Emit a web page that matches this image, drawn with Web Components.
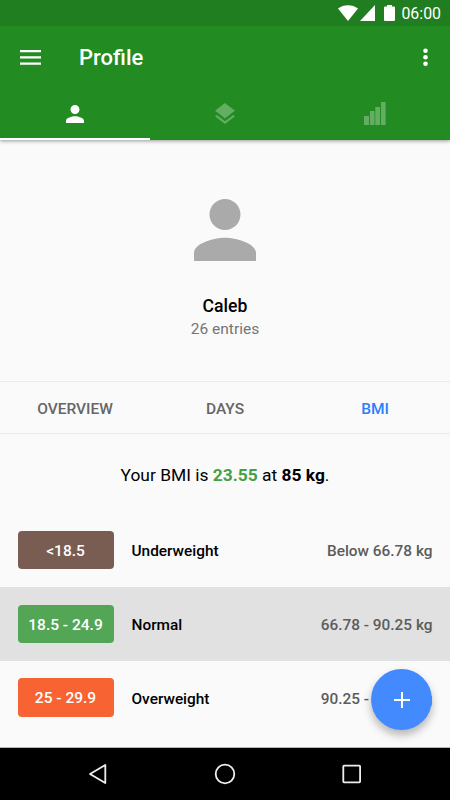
<!DOCTYPE html>
<html lang="en">
<head>
<meta charset="utf-8">
<title>Profile</title>
<style>
	html, body {
		margin: 0;
		height: 100%;
		overflow: hidden;
	}
	body {
		font-family: Roboto, "Noto Sans", sans-serif;
		color: #000;
		background: #fafafa;
	}
</style>
</head>
<body>
<profile-app></profile-app>

<script>
// base class: puts the styles and the markup in an open shadow root
class BaseElement extends HTMLElement {
	constructor() {
		super();
		this.attachShadow({ mode: 'open' });
	}

	connectedCallback() {
		this.shadowRoot.innerHTML = `<style>${this.styles()}</style>${this.render()}`;
	}
}

const icons = {
	wifi: ['0 0 20 16', '<path d="M0 3.6C2.7 1.400 6.100.2 10 .2s7.300 1.200 10 3.400L10 16z"/>'],
	cell: ['0 0 16 16', '<path d="M0 16 16 0v16z"/>'],
	battery: ['0 0 11 16', '<path d="M3 0h5v1.500h2a1 1 0 0 1 1 1V15a1 1 0 0 1-1 1H1a1 1 0 0 1-1-1V2.500a1 1 0 0 1 1-1h2z"/>'],
	menu: ['0 0 21 15', '<path d="M0 0h21v2.300H0zM0 6.300h21v2.300H0zM0 12.500h21v2.300H0z"/>'],
	more: ['0 0 5 19', '<circle cx="2.500" cy="2.700" r="2.300"/><circle cx="2.500" cy="9.300" r="2.300"/><circle cx="2.500" cy="15.800" r="2.300"/>'],
	person: ['4 4 16 16', '<path d="M12 12c2.210 0 4-1.790 4-4s-1.790-4-4-4-4 1.790-4 4 1.790 4 4 4zm0 2c-2.670 0-8 1.340-8 4v2h16v-2c0-2.660-5.330-4-8-4z"/>'],
	layers: ['3 2 18 19.070', '<path d="M11.990 18.540l-7.370-5.730L3 14.070l9 7 9-7-1.630-1.270-7.380 5.740zM12 16l7.360-5.730L21 9l-9-7-9 7 1.630 1.270L12 16z"/>'],
	chart: ['0 0 22 23', '<path d="M0 14h5v9H0zM6 9h4.500v14H6zM11.300 5H16v18h-4.700zM17 0h4.600v23H17z"/>'],
	plus: ['0 0 16 16', '<path d="M7 0h2v7h7v2H9v7H7V9H0V7h7z"/>'],
	back: ['0 0 20 22', '<path d="M17.300 2v18L2 11z" fill="none" stroke="currentColor" stroke-width="1.800" stroke-linejoin="round"/>'],
	home: ['0 0 22 22', '<circle cx="11" cy="11" r="9.300" fill="none" stroke="currentColor" stroke-width="1.800"/>'],
	recent: ['0 0 20 20', '<rect x="1.300" y="1.600" width="16.800" height="16.800" rx=".8" fill="none" stroke="currentColor" stroke-width="1.800"/>'],
};

class AppIcon extends BaseElement {
	styles() {
		return `
			:host { display: inline-flex; flex: none; }
			svg { display: block; fill: currentColor; }
		`;
	}

	render() {
		const [box, shape] = icons[this.getAttribute('name')];
		const w = this.getAttribute('w');
		const h = this.getAttribute('h');
		return `<svg width="${w}" height="${h}" viewBox="${box}" preserveAspectRatio="none">${shape}</svg>`;
	}
}
customElements.define('app-icon', AppIcon);

class StatusBar extends BaseElement {
	styles() {
		return `
			:host {
				display: flex;
				justify-content: flex-end;
				align-items: center;
				box-sizing: border-box;
				height: 26px;
				padding-right: 9px;
				background: #207d20;
				color: #fff;
				font-size: 16px;
				line-height: 26px;
			}
			.cell { margin-left: 2px; }
			.battery { margin: 0 6.500px 0 9px; }
			time { padding-top: 2px; font-size: 15.9px; }
		`;
	}

	render() {
		return `
			<app-icon name="wifi" w="20" h="16"></app-icon>
			<app-icon class="cell" name="cell" w="15" h="16"></app-icon>
			<app-icon class="battery" name="battery" w="11" h="16"></app-icon>
			<time>06:00</time>
		`;
	}
}
customElements.define('status-bar', StatusBar);

class ToolBar extends BaseElement {
	styles() {
		return `
			:host {
				display: flex;
				align-items: center;
				box-sizing: border-box;
				height: 62px;
				padding: 0 22px 0 20px;
			}
			h1 {
				flex: 1;
				margin: 1px 0 0 38px;
				font-size: 22px;
				font-weight: 500;
				line-height: 26px;
			}
		`;
	}

	render() {
		return `
			<app-icon name="menu" w="21" h="15"></app-icon>
			<h1><slot></slot></h1>
			<app-icon name="more" w="5" h="19"></app-icon>
		`;
	}
}
customElements.define('tool-bar', ToolBar);

class IconTab extends BaseElement {
	styles() {
		return `
			:host {
				display: flex;
				flex: 1;
				justify-content: center;
				align-items: center;
				box-sizing: border-box;
				height: 52px;
				padding-top: 1px;
				border-bottom: 2px solid transparent;
				color: rgba(255, 255, 255, .3);
			}
			:host([active]) {
				color: #fff;
				border-bottom-color: #fff;
			}
		`;
	}

	render() {
		return '<slot></slot>';
	}
}
customElements.define('icon-tab', IconTab);

class ProfileHeader extends BaseElement {
	styles() {
		return `
			:host {
				display: flex;
				flex-direction: column;
				align-items: center;
				box-sizing: border-box;
				height: 242px;
				padding-top: 59px;
				border-bottom: 1px solid #ebebeb;
			}
			app-icon { color: #aaa; }
			.name {
				margin-top: 34px;
				font-size: 17.6px;
				font-weight: 500;
				line-height: 22px;
			}
			.count {
				margin-top: 2px;
				color: #757575;
				font-size: 15.5px;
				line-height: 20px;
			}
		`;
	}

	render() {
		return `
			<app-icon name="person" w="62" h="62"></app-icon>
			<div class="name"><slot name="name"></slot></div>
			<div class="count"><slot name="count"></slot></div>
		`;
	}
}
customElements.define('profile-header', ProfileHeader);

class TextTab extends BaseElement {
	styles() {
		return `
			:host {
				flex: 1;
				color: #666;
				font-size: 15.5px;
				font-weight: 500;
				line-height: 54px;
				text-align: center;
			}
			:host([active]) { color: #2a7fff; }
		`;
	}

	render() {
		return '<slot></slot>';
	}
}
customElements.define('text-tab', TextTab);

class BmiRow extends BaseElement {
	styles() {
		return `
			:host {
				display: flex;
				align-items: center;
				box-sizing: border-box;
				height: 73.7px;
				padding: 0 17.5px;
				font-size: 15.4px;
				font-weight: 500;
			}
			:host([current]) { background: #e1e1e1; }
			.range {
				box-sizing: border-box;
				width: 96px;
				height: 38.5px;
				padding-top: 1px;
				border-radius: 4px;
				background: var(--range-color);
				color: #fff;
				font-size: 15.5px;
				line-height: 38.5px;
				text-align: center;
			}
			.label { flex: 1; margin-left: 18px; }
			.label, .weight { padding-top: 2px; }
			.weight { color: #5c5c5c; }
		`;
	}

	render() {
		return `
			<div class="range">${this.getAttribute('range').replace('<', '&lt;')}</div>
			<div class="label"><slot></slot></div>
			<div class="weight">${this.getAttribute('weight')}</div>
		`;
	}
}
customElements.define('bmi-row', BmiRow);

class FabButton extends BaseElement {
	styles() {
		return `
			:host {
				display: flex;
				justify-content: center;
				align-items: center;
				width: 61px;
				height: 61px;
				border-radius: 50%;
				background: #448aff;
				color: #fff;
				box-shadow: 0 5px 9px rgba(0, 0, 0, .28);
			}
		`;
	}

	render() {
		return '<app-icon name="plus" w="16" h="16"></app-icon>';
	}
}
customElements.define('fab-button', FabButton);

class NavBar extends BaseElement {
	styles() {
		return `
			:host {
				display: flex;
				justify-content: center;
				align-items: center;
				gap: 106px;
				height: 52px;
				background: #000;
				color: #eee;
			}
		`;
	}

	render() {
		return `
			<app-icon name="back" w="20" h="22"></app-icon>
			<app-icon name="home" w="22" h="22"></app-icon>
			<app-icon name="recent" w="20" h="20"></app-icon>
		`;
	}
}
customElements.define('nav-bar', NavBar);

class ProfileApp extends BaseElement {
	styles() {
		return `
			:host {
				display: flex;
				flex-direction: column;
				width: 450px;
				height: 800px;
				overflow: hidden;
			}
			header {
				background: #228b22;
				color: #fff;
				box-shadow: 0 1px 4px rgba(0, 0, 0, .4);
				z-index: 1;
			}
			.tabs { display: flex; }
			main {
				position: relative;
				flex: 1;
				box-sizing: border-box;
				border-bottom: 1px solid #b5b5b5;
			}
			.sections {
				display: flex;
				height: 51px;
				border-bottom: 1px solid #ebebeb;
			}
			.summary {
				margin: 0;
				height: 79.3px;
				font-size: 17.4px;
				line-height: 82px;
				text-align: center;
			}
			.summary b { font-weight: 700; }
			.summary .value { color: #43a047; }
			fab-button {
				position: absolute;
				right: 18px;
				bottom: 17px;
			}
		`;
	}

	render() {
		return `
			<header>
				<status-bar></status-bar>
				<tool-bar>Profile</tool-bar>
				<div class="tabs">
					<icon-tab active><app-icon name="person" w="18" h="18"></app-icon></icon-tab>
					<icon-tab><app-icon name="layers" w="20" h="21"></app-icon></icon-tab>
					<icon-tab><app-icon name="chart" w="22" h="23"></app-icon></icon-tab>
				</div>
			</header>
			<main>
				<profile-header>
					<span slot="name">Caleb</span>
					<span slot="count">26 entries</span>
				</profile-header>
				<div class="sections">
					<text-tab>OVERVIEW</text-tab>
					<text-tab>DAYS</text-tab>
					<text-tab active>BMI</text-tab>
				</div>
				<p class="summary">Your BMI is <b class="value">23.55</b> at <b>85 kg</b>.</p>
				<bmi-row range="<18.5" weight="Below 66.78 kg" style="--range-color: #795c52">Underweight</bmi-row>
				<bmi-row current range="18.5 - 24.9" weight="66.78 - 90.25 kg" style="--range-color: #53a656">Normal</bmi-row>
				<bmi-row range="25 - 29.9" weight="90.25 - 108.3 kg" style="--range-color: #f76333">Overweight</bmi-row>
				<fab-button></fab-button>
			</main>
			<nav-bar></nav-bar>
		`;
	}
}
customElements.define('profile-app', ProfileApp);
</script>
</body>
</html>
